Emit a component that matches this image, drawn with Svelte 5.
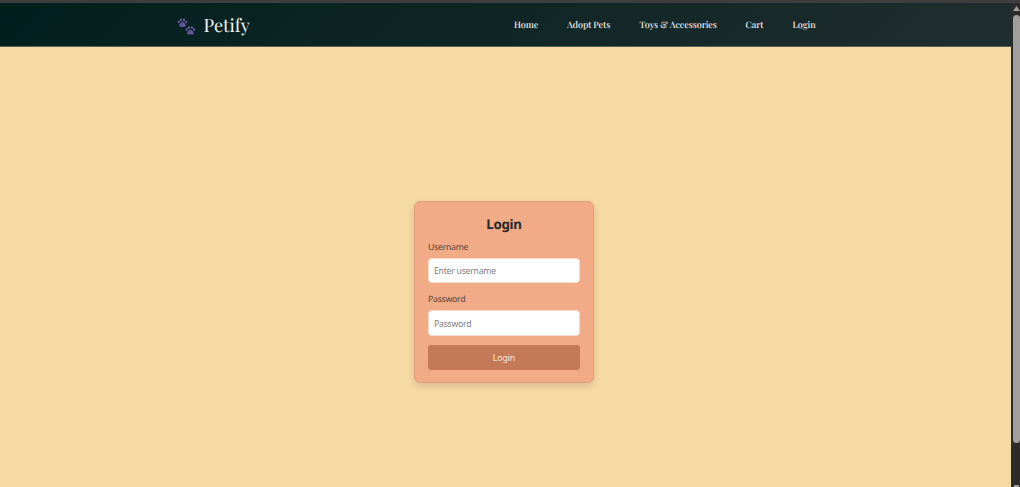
<script>
  const links = [
    { label: 'Home', width: 24 },
    { label: 'Adopt Pets', width: 43.5 },
    { label: 'Toys & Accessories', width: 77 },
    { label: 'Cart', width: 18 },
    { label: 'Login', width: 23 }
  ];
  let username = $state('');
  let password = $state('');
</script>

{#snippet paw(x, y)}
  <g transform="translate({x} {y})">
    <ellipse cx="1.4" cy="3.7" rx="1.15" ry="1.5" transform="rotate(-20 1.4 3.7)" />
    <ellipse cx="3.6" cy="1.7" rx="1.15" ry="1.6" />
    <ellipse cx="6.6" cy="1.7" rx="1.15" ry="1.6" />
    <ellipse cx="8.8" cy="3.7" rx="1.15" ry="1.5" transform="rotate(20 8.8 3.7)" />
    <path d="M5.1 3.9C3.7 3.9 1.8 5.9 1.8 7.4C1.8 9.1 3.6 8.8 5.1 8.5C6.6 8.8 8.4 9.1 8.4 7.4C8.4 5.9 6.5 3.9 5.1 3.9Z" />
  </g>
{/snippet}

<div class="window">
  <div class="page">
    <header>
      <a class="brand" href="#home">
        <svg width="19" height="18" viewBox="0 0 19 18" fill="#655494" aria-hidden="true">
          {@render paw(0.4, 0.2)}
          {@render paw(8.3, 7.8)}
        </svg>
        <span>Petify</span>
      </a>
      <nav>
        {#each links as link}
          <a href="#{link.label}" style="width: {link.width}px">{link.label}</a>
        {/each}
      </nav>
    </header>
    <main>
      <form onsubmit={(e) => e.preventDefault()}>
        <h1>Login</h1>
        <label for="username">Username</label>
        <input id="username" placeholder="Enter username" bind:value={username} />
        <label for="password">Password</label>
        <input id="password" type="password" placeholder="Password" bind:value={password} />
        <button>Login</button>
      </form>
    </main>
  </div>
  <div class="scrollbar">
    <i class="arrow"></i>
    <div class="thumb"></div>
    <div class="end"></div>
  </div>
</div>

<style>
  :global(body) { margin: 0; }
  .window {
    box-sizing: border-box;
    display: flex;
    width: 1020px;
    height: 487px;
    border-top: 3px solid #3e3e3e;
    overflow: hidden;
    background: #f6daa6;
    text-rendering: geometricPrecision;
  }
  .page {
    width: 1011px;
    display: flex;
    flex-direction: column;
  }
  header {
    box-sizing: border-box;
    height: 44px;
    padding: 0 195.5px 0 177px;
    display: flex;
    justify-content: space-between;
    align-items: center;
    background: linear-gradient(135deg, #001f1d, #202d2f);
    border-bottom: 1px solid #596158;
  }
  a { color: #f4f5f4; text-decoration: none; }
  .brand {
    display: flex;
    align-items: center;
    gap: 7.5px;
    font: 18.1px/30px "Playfair Display", "Liberation Serif", serif;
  }
  .brand svg { margin-top: 5px; }
  .brand span { margin-top: 1px; }
  nav { display: flex; gap: 29px; }
  nav a {
    white-space: nowrap;
    font: 500 9px/16px "Playfair Display", "Liberation Serif", serif;
    letter-spacing: -0.05px;
  }
  main {
    flex: 1;
    display: flex;
    justify-content: center;
    align-items: flex-start;
  }
  form {
    box-sizing: border-box;
    width: 180px;
    height: 182px;
    margin: 154px 0 0 -3px;
    padding: 13px 13px 12px;
    display: flex;
    flex-direction: column;
    border: 1px solid #df9e7c;
    border-radius: 6px;
    background: #f1ab87;
    box-shadow: 0 3px 7px rgba(80, 50, 20, 0.18);
    font-family: "Segoe UI", "Noto Sans", sans-serif;
  }
  h1 {
    margin: 0 0 8px;
    font-size: 13.3px;
    line-height: 18px;
    letter-spacing: -0.3px;
    text-align: center;
    color: #252a2d;
  }
  label {
    font-size: 8.7px;
    line-height: 13px;
    letter-spacing: -0.25px;
    margin-bottom: 4px;
    color: #59443b;
  }
  input {
    box-sizing: border-box;
    flex-shrink: 0;
    width: 152px;
    height: 25px;
    margin: 0 0 10px;
    padding: 1px 5px 0;
    border: 1px solid #f3ddd2;
    border-radius: 4px;
    background: #fff;
    font: 8.7px "Segoe UI", "Noto Sans", sans-serif;
    letter-spacing: -0.25px;
    outline: none;
  }
  #password { height: 26px; margin-bottom: 9px; }
  input::placeholder { color: #7b7f82; opacity: 1; }
  button {
    flex-shrink: 0;
    width: 152px;
    height: 25px;
    padding: 0;
    border: 0;
    border-radius: 3px;
    background: #c57a57;
    color: #fbe9df;
    font: 8.7px "Segoe UI", "Noto Sans", sans-serif;
    letter-spacing: -0.1px;
  }
  .scrollbar {
    box-sizing: border-box;
    width: 9px;
    padding: 3px 0 0 2px;
    display: flex;
    flex-direction: column;
    background: #2b2b2b;
  }
  .arrow {
    width: 7px;
    height: 5px;
    background: #9f9f9f;
    clip-path: polygon(50% 0, 100% 100%, 0 100%);
  }
  .thumb {
    width: 7px;
    height: 428px;
    margin-top: 4px;
    border-radius: 4px;
    background: #9f9f9f;
  }
  .end {
    width: 5px;
    height: 2px;
    margin: 42px 0 0 1px;
    background: #9f9f9f;
  }
</style>
